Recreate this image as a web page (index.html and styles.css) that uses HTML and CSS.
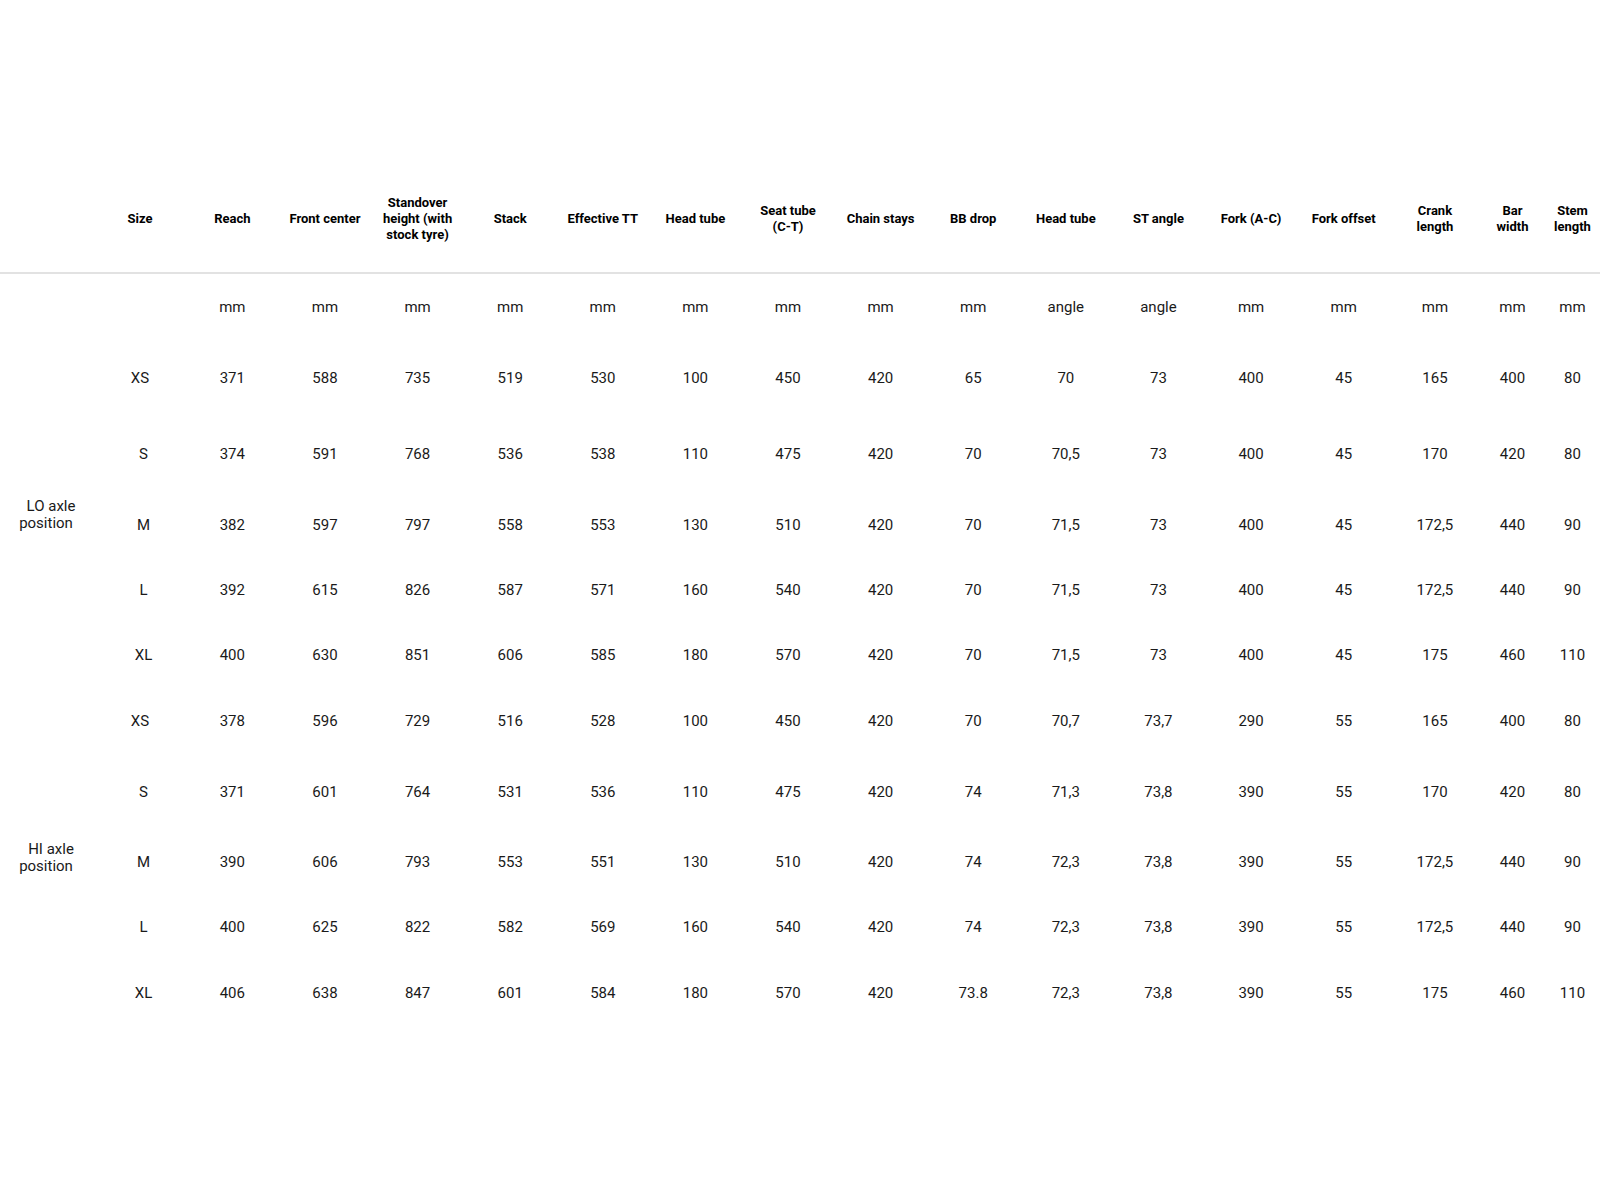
FILE: index.html
```html
<!DOCTYPE html>
<html lang="en">
<head>
<meta charset="utf-8">
<title>Geometry</title>
<link rel="stylesheet" href="styles.css">
</head>
<body>
<table class="geo">
  <colgroup>
    <col class="c-label">
    <col class="c-size">
    <col class="c-std"><col class="c-std"><col class="c-std"><col class="c-std"><col class="c-std">
    <col class="c-std"><col class="c-std"><col class="c-std"><col class="c-std"><col class="c-std">
    <col class="c-std"><col class="c-std"><col class="c-std">
    <col class="c-crank">
    <col class="c-bar">
    <col class="c-stem">
  </colgroup>
  <thead>
    <tr>
      <th></th>
      <th>Size</th>
      <th>Reach</th>
      <th>Front center</th>
      <th>Standover<br>height (with<br>stock tyre)</th>
      <th>Stack</th>
      <th>Effective TT</th>
      <th>Head tube</th>
      <th>Seat tube<br>(C-T)</th>
      <th>Chain stays</th>
      <th>BB drop</th>
      <th>Head tube</th>
      <th>ST angle</th>
      <th>Fork (A-C)</th>
      <th>Fork offset</th>
      <th>Crank<br>length</th>
      <th>Bar<br>width</th>
      <th>Stem<br>length</th>
    </tr>
  </thead>
  <tbody>
    <tr>
      <td></td><td></td>
      <td>mm</td><td>mm</td><td>mm</td><td>mm</td><td>mm</td><td>mm</td><td>mm</td><td>mm</td><td>mm</td>
      <td>angle</td><td>angle</td>
      <td>mm</td><td>mm</td><td>mm</td><td>mm</td><td>mm</td>
    </tr>
    <tr>
      <td class="label" rowspan="5"><span class="first">LO axle</span><br>position</td>
      <td>XS</td><td>371</td><td>588</td><td>735</td><td>519</td><td>530</td><td>100</td><td>450</td><td>420</td><td>65</td><td>70</td><td>73</td><td>400</td><td>45</td><td>165</td><td>400</td><td>80</td>
    </tr>
    <tr>
      <td class="sz">S</td><td>374</td><td>591</td><td>768</td><td>536</td><td>538</td><td>110</td><td>475</td><td>420</td><td>70</td><td>70,5</td><td>73</td><td>400</td><td>45</td><td>170</td><td>420</td><td>80</td>
    </tr>
    <tr>
      <td class="sz">M</td><td>382</td><td>597</td><td>797</td><td>558</td><td>553</td><td>130</td><td>510</td><td>420</td><td>70</td><td>71,5</td><td>73</td><td>400</td><td>45</td><td>172,5</td><td>440</td><td>90</td>
    </tr>
    <tr>
      <td class="sz">L</td><td>392</td><td>615</td><td>826</td><td>587</td><td>571</td><td>160</td><td>540</td><td>420</td><td>70</td><td>71,5</td><td>73</td><td>400</td><td>45</td><td>172,5</td><td>440</td><td>90</td>
    </tr>
    <tr>
      <td class="sz">XL</td><td>400</td><td>630</td><td>851</td><td>606</td><td>585</td><td>180</td><td>570</td><td>420</td><td>70</td><td>71,5</td><td>73</td><td>400</td><td>45</td><td>175</td><td>460</td><td>110</td>
    </tr>
    <tr>
      <td class="label" rowspan="5"><span class="first">HI axle</span><br>position</td>
      <td>XS</td><td>378</td><td>596</td><td>729</td><td>516</td><td>528</td><td>100</td><td>450</td><td>420</td><td>70</td><td>70,7</td><td>73,7</td><td>290</td><td>55</td><td>165</td><td>400</td><td>80</td>
    </tr>
    <tr>
      <td class="sz">S</td><td>371</td><td>601</td><td>764</td><td>531</td><td>536</td><td>110</td><td>475</td><td>420</td><td>74</td><td>71,3</td><td>73,8</td><td>390</td><td>55</td><td>170</td><td>420</td><td>80</td>
    </tr>
    <tr>
      <td class="sz">M</td><td>390</td><td>606</td><td>793</td><td>553</td><td>551</td><td>130</td><td>510</td><td>420</td><td>74</td><td>72,3</td><td>73,8</td><td>390</td><td>55</td><td>172,5</td><td>440</td><td>90</td>
    </tr>
    <tr>
      <td class="sz">L</td><td>400</td><td>625</td><td>822</td><td>582</td><td>569</td><td>160</td><td>540</td><td>420</td><td>74</td><td>72,3</td><td>73,8</td><td>390</td><td>55</td><td>172,5</td><td>440</td><td>90</td>
    </tr>
    <tr>
      <td class="sz">XL</td><td>406</td><td>638</td><td>847</td><td>601</td><td>584</td><td>180</td><td>570</td><td>420</td><td>73.8</td><td>72,3</td><td>73,8</td><td>390</td><td>55</td><td>175</td><td>460</td><td>110</td>
    </tr>
  </tbody>
</table>
</body>
</html>
```

FILE: styles.css
```css
html, body {
  margin: 0;
  padding: 0;
  background: #ffffff;
}

body {
  font-family: Roboto, "Liberation Sans", Arial, sans-serif;
  color: #1a1a1a;
  width: 1600px;
  overflow: hidden;
}

.geo {
  margin-top: 166px;
  width: 1600px;
  table-layout: fixed;
  border-collapse: separate;
  border-spacing: 0;
}

.c-label { width: 94px; }
.c-size  { width: 92px; }
.c-std   { width: 92.6px; }
.c-crank { width: 90px; }
.c-bar   { width: 65px; }
.c-stem  { width: 55px; }

.geo thead tr {
  height: 108px;
}

.geo th {
  font-size: 13px;
  line-height: 16px;
  font-weight: 700;
  color: #000000;
  text-align: center;
  vertical-align: middle;
  padding: 0 4px;
  border-bottom: 2px solid #e2e2e2;
  white-space: nowrap;
}

.geo td {
  font-size: 15px;
  line-height: 1.15;
  text-align: center;
  vertical-align: middle;
  padding: 0 4px;
  white-space: nowrap;
}

.geo td.label {
  padding: 0 6px 0 4px;
}

.geo td.label .first {
  padding-left: 10px;
}

.geo td.sz {
  padding-left: 11px;
}

.geo tbody tr:nth-child(1)  { height: 68px; }
.geo tbody tr:nth-child(2)  { height: 74px; }
.geo tbody tr:nth-child(3)  { height: 78px; }
.geo tbody tr:nth-child(4)  { height: 64px; }
.geo tbody tr:nth-child(5)  { height: 66px; }
.geo tbody tr:nth-child(6)  { height: 64px; }
.geo tbody tr:nth-child(7)  { height: 68px; }
.geo tbody tr:nth-child(8)  { height: 74px; }
.geo tbody tr:nth-child(9)  { height: 66px; }
.geo tbody tr:nth-child(10) { height: 64px; }
.geo tbody tr:nth-child(11) { height: 68px; }
```
